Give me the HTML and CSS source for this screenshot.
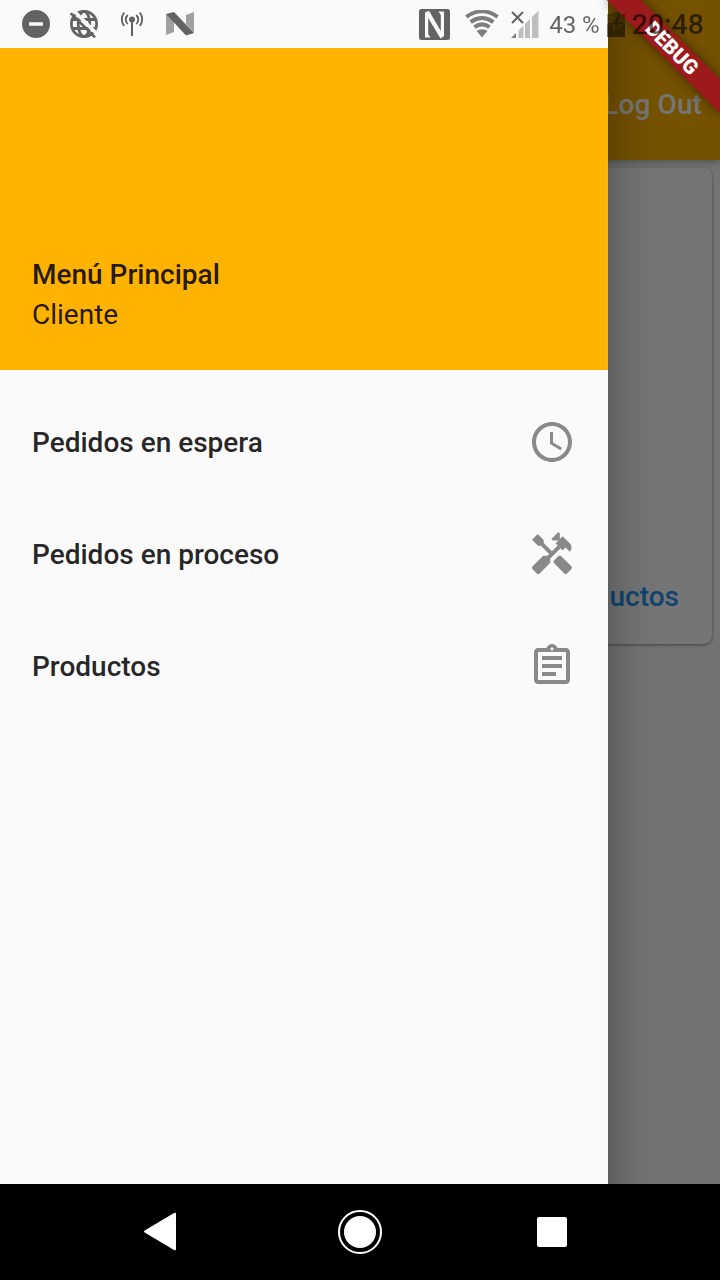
FILE: index.html
```
<!DOCTYPE html>
<html lang="es">
<head>
<meta charset="utf-8">
<title>Menú Principal</title>
<link rel="stylesheet" href="styles.css">
</head>
<body>
<div class="phone">
  <div class="viewport">
    <main class="app">
      <header class="appbar"><span class="logout">Log Out</span></header>
      <section class="card"><span class="card-link">Productos</span></section>
    </main>
    <div class="scrim"></div>
    <aside class="drawer">
      <div class="drawer-header">
        <div class="title">Menú Principal</div>
        <div class="subtitle">Cliente</div>
      </div>
      <nav class="menu">
        <a class="item"><span>Pedidos en espera</span>
          <svg class="icon" viewBox="0 0 24 24"><path d="M11.99 2C6.47 2 2 6.48 2 12s4.47 10 9.99 10C17.52 22 22 17.52 22 12S17.52 2 11.99 2zM12 20c-4.42 0-8-3.58-8-8s3.58-8 8-8 8 3.58 8 8-3.58 8-8 8zm.5-13H11v6l5.250 3.150.750-1.230-4.500-2.670z"/></svg>
        </a>
        <a class="item"><span>Pedidos en proceso</span>
          <svg class="icon" viewBox="0 0 24 24"><path d="M21.67 18.17l-5.3-5.3h-.99l-2.54 2.54v.99l5.3 5.3c.39.39 1.02.39 1.41 0l2.12-2.12c.39-.38.39-1.02 0-1.41z"/><path d="M17.34 10.19l1.41-1.41 2.12 2.12c1.17-1.17 1.17-3.07 0-4.24l-3.54-3.54-1.41 1.41V1.710L15.220 1l-3.540 3.540.710.710h2.830l-1.410 1.410 1.060 1.060-2.890 2.890-4.130-4.130V5.060L4.830 2.040 2 4.870 5.030 7.900h1.410l4.130 4.130-.850.850H7.600l-5.300 5.300c-.390.390-.390 1.020 0 1.410l2.120 2.120c.390.390 1.020.390 1.410 0l5.300-5.300v-2.120l5.150-5.150z"/></svg>
        </a>
        <a class="item"><span>Productos</span>
          <svg class="icon" viewBox="0 0 24 24"><path d="M7 15h7v2H7zm0-4h10v2H7zm0-4h10v2H7zm12-4h-4.180C14.400 1.840 13.300 1 12 1s-2.400.840-2.820 2H5c-1.100 0-2 .900-2 2v14c0 1.100.900 2 2 2h14c1.100 0 2-.900 2-2V5c0-1.100-.900-2-2-2zm-7-.250c.410 0 .750.340.750.750s-.340.750-.750.750-.750-.340-.750-.750.340-.750.750-.750zM19 19H5V5h14z"/></svg>
        </a>
      </nav>
    </aside>
    <div class="banner">DEBUG</div>
    <div class="status">
      <div class="status-left">
        <svg width="28" height="28" viewBox="0 0 28 28"><path fill-rule="evenodd" d="M14 0a14 14 0 1 0 0 28a14 14 0 0 0 0-28zM7 12.200h14v3.600H7z"/></svg>
        <svg width="28" height="28" viewBox="0 0 28 28">
          <defs><mask id="slash"><rect width="28" height="28" fill="#fff"/><path d="M2 -1L29 26" stroke="#000" stroke-width="3.500"/></mask></defs>
          <g mask="url(#slash)" fill="none" stroke="#000" stroke-width="2.800"><circle cx="14" cy="14" r="12.600"/><ellipse cx="14" cy="14" rx="5.800" ry="12.600"/><path d="M2 9.500h24M2 18.500h24"/></g>
          <path d="M.8 3.200L25 27.400" stroke="#000" stroke-width="2.600"/>
        </svg>
        <svg class="tower" width="22" height="28" viewBox="0 0 22 28"><circle cx="11" cy="9.500" r="3"/><path d="M10 10h2v16h-2z"/><path fill="none" stroke="#000" stroke-width="1.900" d="M6.800 5a6 6 0 0 0 0 9M15.200 5a6 6 0 0 1 0 9M3.300 2.500a10.500 10.500 0 0 0 0 13.500M18.700 2.500a10.500 10.500 0 0 1 0 13.500"/></svg>
        <svg class="nougat" width="28" height="28" viewBox="0 0 28 28"><path opacity=".6" d="M0 4v21l8-3V11zM28 2l-8 3v9l8 9z"/><path d="M0 4l8-2 20 21-8 2.500z"/></svg>
      </div>
      <div class="status-right">
        <svg width="31" height="31" viewBox="0 0 31 31"><path fill-rule="evenodd" d="M2.500 0h26Q31 0 31 2.500v26Q31 31 28.500 31h-26Q0 31 0 28.500v-26Q0 0 2.500 0zM6 3.500L10 1.800 21.800 22V6L19.500 2.500H25V27L21.500 29.500 9.200 9V25L11.500 28.500H6z"/></svg>
        <svg class="wifi" width="34" height="28" viewBox="0 0 34 28"><path fill="none" stroke="#000" opacity=".82" stroke-width="4" d="M1.400 6.800Q17-4.200 32.600 6.800M5.600 12Q17 4 28.400 12M9.500 17.200Q17 11.500 24.500 17.200"/><path opacity=".82" d="M11.500 20.800Q17 17.600 22.500 20.800L17 27.500z"/></svg>
        <svg class="signal" width="28" height="28" viewBox="0 0 28 28"><path opacity=".4" d="M7.500 20.500l5-5V28h-5zM14 14l5-5v19h-5zM21 7l6.500-6.500V28H21z"/><path opacity=".8" d="M0 28l5-5v5z"/><path d="M1 2l11 11M12 2L1 13" stroke="#000" stroke-width="2"/></svg>
        <span class="percent">43 %</span>
        <svg class="battery" width="18" height="28" viewBox="0 0 18 28"><path opacity=".5" d="M0 4h5V2h8v2h5v10H0z"/><path opacity=".85" d="M0 13h6l5-8h2l-2 7h5L6 23l2-8H4zM0 14v13h18V13h-2L6 23l1-8z"/></svg>
        <span class="clock">20:48</span>
      </div>
    </div>
  </div>
  <footer class="navbar">
    <svg width="192" height="96" viewBox="0 0 192 96"><path d="M49.500 46l28.500-17q2-1 2 1v35q0 2-2 1L49.500 49q-3-1.500 0-3z"/></svg>
    <svg width="192" height="96" viewBox="0 0 192 96"><circle cx="72" cy="48" r="16"/><circle cx="72" cy="48" r="21" fill="none" stroke="#fff" stroke-width="2"/></svg>
    <svg width="192" height="96" viewBox="0 0 192 96"><rect x="57" y="33" width="30" height="30" rx="2"/></svg>
  </footer>
</div>
</body>
</html>
```
FILE: styles.css
```
* { box-sizing: border-box; }
body { margin: 0; font-family: Roboto, sans-serif; font-size: 28px; }
.phone { display: flex; flex-direction: column; width: 720px; height: 1280px; overflow: hidden; }
.viewport { position: relative; flex: 1; overflow: hidden; }
.app { height: 100%; background: #fafafa; }
.appbar { display: flex; align-items: center; justify-content: flex-end; height: 160px; padding: 48px 18px 0 0; background: #ffb300; box-shadow: 0 2px 8px rgba(0,0,0,.3); color: #fff; font-weight: 500; letter-spacing: .1px; }
.card { display: flex; align-items: flex-end; justify-content: flex-end; height: 476px; margin: 8px; padding: 0 33px 31px 0; border-radius: 8px; background: #fff; box-shadow: 0 1px 3px rgba(0,0,0,.45); color: #2196f3; font-weight: 500; line-height: 33px; }
.scrim { position: absolute; inset: 0; background: rgba(0,0,0,.54); }
.drawer { position: absolute; inset: 0 auto -60px 0; width: 608px; padding-top: 48px; background: #fafafa; box-shadow: 0 0 48px rgba(0,0,0,.35); color: rgba(0,0,0,.87); }
.drawer-header { display: flex; flex-direction: column; justify-content: flex-end; height: 322px; padding: 0 32px 35px; background: #ffb300; line-height: 40px; }
.title { font-weight: 500; }
.menu { padding-top: 16px; }
.item { display: flex; align-items: center; justify-content: space-between; height: 112px; padding: 0 32px; font-weight: 500; }
.icon { width: 48px; height: 48px; fill: rgba(0,0,0,.45); }
.banner { position: absolute; left: 640px; top: 56px; width: 160px; height: 24px; transform: rotate(45deg); transform-origin: 80px -56px; background: #9c1a1b; box-shadow: 0 0 12px rgba(0,0,0,.5); color: #fff; font-size: 20.4px; font-weight: 900; line-height: 24px; text-align: center; }
.status { position: absolute; inset: 0 0 auto; display: flex; justify-content: space-between; height: 48px; padding: 0 16px 0 22px; opacity: .6; }
.status-left, .status-right { display: flex; align-items: center; }
.status-left { gap: 20px; }
.tower { margin-left: 3px; }
.nougat { margin-left: 3px; }
.wifi { margin-left: 15px; }
.signal { margin-left: 12px; }
.percent { margin-left: 10px; font-size: 24px; line-height: 50px; padding-top: 2px; }
.battery { margin-left: 7px; }
.clock { margin-left: 7px; font-size: 28.5px; font-weight: 500; line-height: 50px; padding-top: 2px; }
.navbar { display: flex; justify-content: center; height: 96px; padding-left: 48px; background: #000; }
.navbar svg { flex: none; fill: #fff; }
```
